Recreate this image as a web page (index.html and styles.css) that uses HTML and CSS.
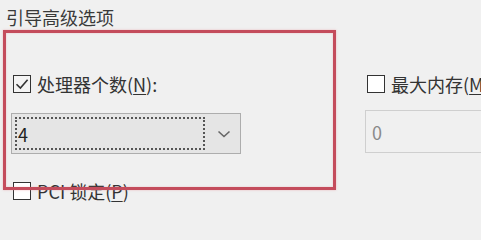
FILE: index.html
```html
<!DOCTYPE html>
<html lang="zh-CN">
<head>
<meta charset="utf-8">
<title>引导高级选项</title>
<link rel="stylesheet" href="styles.css">
</head>
<body>
<div class="dialog">
  <div class="title">引导高级选项</div>
  <div class="group">
    <div class="col-left">
      <label class="check-row">
        <span class="box checked">
          <svg viewBox="0 0 18 18" width="18" height="18"><path d="M3.5 9.2 L7.4 13 L14.6 4.8" fill="none" stroke="#333" stroke-width="1.6"/></svg>
        </span>
        <span class="lbl">处理器个数(<u>N</u>):</span>
      </label>
      <div class="combo">
        <div class="focus"><span class="val">4</span></div>
        <svg class="chev" viewBox="0 0 14 8" width="14" height="8"><path d="M1.5 1.5 L7 6.5 L12.5 1.5" fill="none" stroke="#666" stroke-width="1.6"/></svg>
      </div>
      <label class="check-row pci">
        <span class="box"></span>
        <span class="lbl">PCI 锁定(<u>P</u>)</span>
      </label>
    </div>
    <div class="col-right">
      <label class="check-row">
        <span class="box"></span>
        <span class="lbl">最大内存(<u>M</u>B):</span>
      </label>
      <div class="input">0</div>
    </div>
  </div>
  <div class="highlight"></div>
</div>
</body>
</html>
```

FILE: styles.css
```css
html, body {
  margin: 0;
  padding: 0;
  background: #f0f0f0;
  width: 481px;
  height: 204px;
  overflow: hidden;
}
.dialog {
  position: relative;
  width: 481px;
  height: 204px;
  overflow: hidden;
  font-family: "Noto Sans CJK SC", "Noto Sans", sans-serif;
  font-size: 18px;
  color: #333;
}
.title {
  padding: 5px 0 0 6px;
  line-height: 24px;
  color: #3a3a3a;
  white-space: nowrap;
}
.group {
  display: flex;
  padding: 46px 0 0 11px;
  gap: 124px;
}
.col-left {
  width: 230px;
  flex: none;
  display: flex;
  flex-direction: column;
}
.col-right {
  flex: none;
  width: 200px;
  display: flex;
  flex-direction: column;
}
.check-row {
  display: flex;
  align-items: center;
  height: 18px;
  gap: 6px;
  padding-left: 2px;
  white-space: nowrap;
}
.box {
  width: 18px;
  height: 18px;
  box-sizing: border-box;
  border: 1.5px solid #333;
  background: #fff;
  flex: none;
  position: relative;
}
.box svg {
  position: absolute;
  left: -1.5px;
  top: -1.5px;
}
.box.checked {
  background: #f4f4f4;
}
.lbl {
  line-height: 18px;
  color: #333;
}
u {
  text-decoration-thickness: 1px;
  text-underline-offset: 2px;
}
.combo {
  margin-top: 20px;
  height: 41px;
  box-sizing: border-box;
  background: #e5e5e5;
  border: 1px solid #adadad;
  display: flex;
  align-items: center;
  padding: 3px 0 3px 3px;
}
.focus {
  width: 190px;
  height: 100%;
  box-sizing: border-box;
  border: 2px dotted #555;
  display: flex;
  align-items: center;
  padding-left: 1px;
}
.val {
  color: #222;
  line-height: 20px;
}
.chev {
  margin-left: 12px;
}
.pci {
  margin-top: 28px;
}
.input {
  margin-top: 17px;
  height: 43px;
  box-sizing: border-box;
  width: 220px;
  border: 1px solid #cfcfcf;
  background: #f0f0f0;
  color: #8a8a8a;
  padding-left: 6px;
  display: flex;
  align-items: center;
}
.highlight {
  position: absolute;
  left: 3px;
  top: 30px;
  width: 333px;
  height: 160px;
  box-sizing: border-box;
  border: 3px solid #c44c5c;
  box-shadow: 0 0 2px rgba(230, 130, 140, 0.5), inset 0 0 2px rgba(230, 130, 140, 0.4);
  pointer-events: none;
}
```
